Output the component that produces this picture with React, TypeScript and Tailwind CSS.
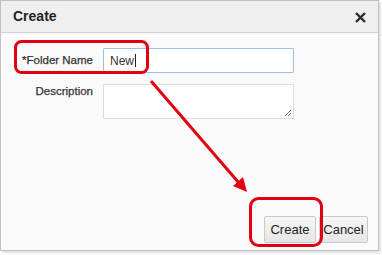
export default function App() {
  return (
    <div className="relative w-[382px] h-[255px] bg-white overflow-hidden font-['Liberation_Sans',Arial,sans-serif]">
      {/* ── Dialog ── */}
      <div className="flex flex-col w-[379px] h-[251px] border border-[#c2c2c2] bg-[#fafafa] shadow-[2px_2px_2px_rgba(0,0,0,0.12)]">
        <div className="flex items-center justify-between h-[32px] shrink-0 bg-[#efefef] border-b border-[#d4d4d4] pl-[12px] pr-[12px]">
          <span className="text-[14px] font-bold text-[#1f1f1f]">Create</span>
          <svg width="11" height="11" viewBox="0 0 11 11" className="mt-[1px]">
            <path d="M1 1L10 10M10 1L1 10" stroke="#2b2b2b" strokeWidth="2.4" />
          </svg>
        </div>

        <div className="flex flex-col gap-[11px] pt-[15px]">
          <div className="flex items-center">
            <label className="w-[92px] text-right text-[11.5px] text-[#333] [-webkit-text-stroke:0.25px_#333]">*Folder Name</label>
            <div className="ml-[10px] flex items-center w-[191px] h-[25px] bg-white border border-[#9fbde6] rounded-[1px] pl-[6px] text-[12px] text-[#333]">
              New<span className="ml-[1px] w-px h-[13px] bg-[#222]" />
            </div>
          </div>
          <div className="flex items-start">
            <label className="w-[92px] text-right text-[11.5px] leading-[12px] text-[#333] pt-[1px] [-webkit-text-stroke:0.25px_#333]">Description</label>
            <div className="relative ml-[10px] w-[191px] h-[35px] bg-white border border-[#dcdcdc]">
              <svg width="8" height="8" viewBox="0 0 8 8" className="absolute right-[1px] bottom-[1px]">
                <path d="M7 1L1 7M7 4L4 7" stroke="#777" strokeWidth="1" />
              </svg>
            </div>
          </div>
        </div>

        <div className="flex justify-end gap-[3px] mt-auto mb-[7px] pr-[10px]">
          <button className="w-[52px] h-[27px] bg-gradient-to-b from-[#f6f6f6] to-[#e6e6e6] border border-[#c9c9c9] rounded-[2px] text-[13px] text-[#222]">
            Create
          </button>
          <button className="w-[49px] h-[27px] bg-gradient-to-b from-[#f6f6f6] to-[#e6e6e6] border border-[#c9c9c9] rounded-[2px] text-[13px] text-[#222]">
            Cancel
          </button>
        </div>
      </div>

      {/* ── Red annotation overlay ── */}
      <svg className="absolute inset-0 pointer-events-none" width="382" height="255" viewBox="0 0 382 255">
        <rect x="15.5" y="41.5" width="132" height="31" rx="6" fill="none" stroke="#e00010" strokeWidth="3" />
        <line x1="151" y1="81" x2="239" y2="183" stroke="#e00010" strokeWidth="3" />
        <polygon points="233,186 243,177 247,192" fill="#e00010" />
        <rect x="250.5" y="198.5" width="71" height="47" rx="8" fill="none" stroke="#e00010" strokeWidth="3" />
      </svg>
    </div>
  );
}
